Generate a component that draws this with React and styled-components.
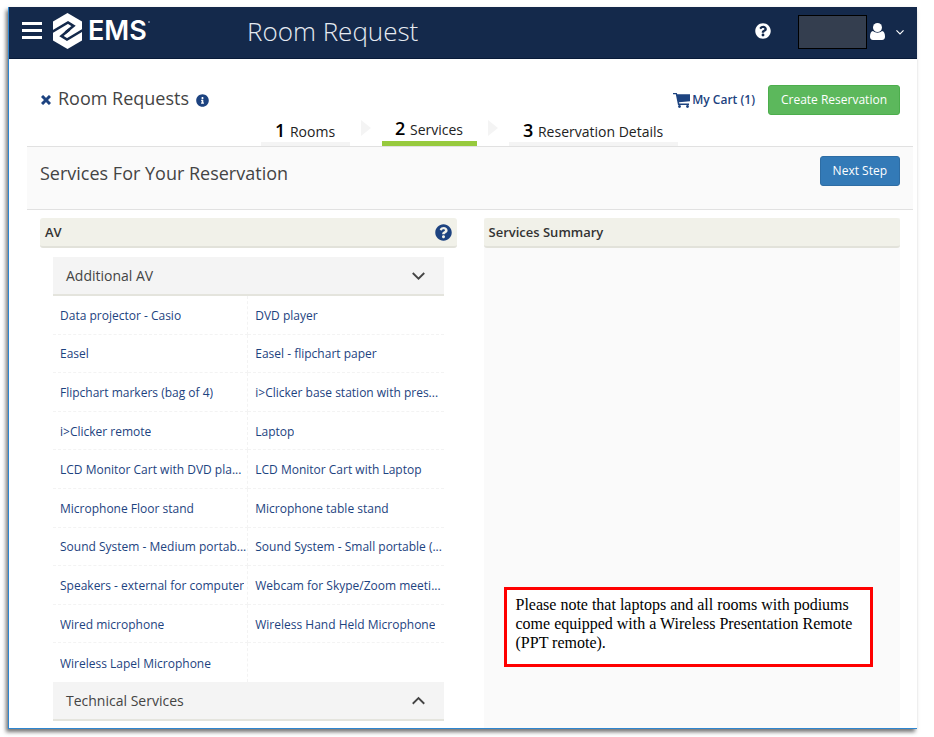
import React from "react";
import styled, { createGlobalStyle, css } from "styled-components";
import { FaQuestionCircle, FaInfoCircle } from "react-icons/fa";

const Global = createGlobalStyle`
  *, *::before, *::after { box-sizing: border-box; }
  body { margin: 0; background: #fff; color: #333; font: 13px/18px "Open Sans", "Noto Sans", sans-serif; }
  h1, h2, h3, p, ul, ol { margin: 0; padding: 0; font-weight: 400; }
  ul, ol { list-style: none; }
  button { font: inherit; cursor: pointer; border: 0; background: none; padding: 0; color: inherit; }
  a { text-decoration: none; color: #1d4380; }
  svg { display: block; flex: none; }
`;

const Window = styled.div`
  margin: 7px 17px 8px 8px;
  border: solid #2e86d0;
  border-width: 0 0 1px 1px;
  box-shadow: -2px 3px 4px rgba(0, 0, 0, 0.55);
  background: #fff;
`;

const TopBar = styled.header`
  display: grid;
  grid-template-columns: 238px 1fr auto;
  align-items: center;
  height: 52px;
  background: #14294b;
  border-bottom: 1px solid #081a38;
  color: #fff;
`;

const Brand = styled.div`
  display: flex;
  align-items: center;
  gap: 10px;
  padding: 0 0 4px 13px;
`;

const PageTitle = styled.h1`
  font-size: 26px;
  line-height: 36px;
  font-weight: 300;
  color: #e6ebf2;
  padding-bottom: 4px;
`;

const Account = styled.div`
  display: flex;
  align-items: center;
  padding: 0 13px 2px 0;
`;

const HelpButton = styled.button`
  margin-right: 27px;
  margin-bottom: 2px;
`;

const AccountButton = styled.button`
  display: flex;
  align-items: center;
  gap: 3px;
`;

const UserName = styled.span`
  width: 69px;
  height: 34px;
  background: #343e4f;
  border: 1px solid #000;
`;

const UserMenuIcons = styled.span`
  display: flex;
  align-items: center;
  gap: 11px;
`;

const Main = styled.main`
  padding: 0 4px 0 18px;
`;

const RequestHead = styled.div`
  display: flex;
  align-items: center;
  justify-content: space-between;
  padding: 26px 13px 0 14px;
`;

const Inline = styled.div`
  display: flex;
  align-items: center;
  gap: 7px;
`;

const RequestTitle = styled.h2`
  font-size: 18px;
  line-height: 26px;
  padding-bottom: 4px;
  color: #444;
`;

const CartLink = styled.a`
  display: flex;
  align-items: center;
  gap: 2px;
  font-size: 12px;
  font-weight: 600;
  margin-right: 6px;
`;

const ActionButton = styled.button`
  height: 30px;
  padding: 0 12px;
  border-radius: 3px;
  font-size: 12px;
  color: #fff;
  border: 1px solid ${(p) => (p.$tone === "green" ? "#4cae4c" : "#2e6da4")};
  background: ${(p) => (p.$tone === "green" ? "#5cb85c" : "#337ab7")};
`;

const Steps = styled.ol`
  display: flex;
  align-items: flex-end;
  gap: 11px;
  height: 31px;
  padding-left: 234px;
`;

const Step = styled.li`
  padding: 1px 15px 0 14px;
  height: 28px;
  font-size: 14px;
  line-height: 22px;
  color: #222;
  border-bottom: 4px solid #f4f4f4;
  strong { font-size: 18px; font-weight: 600; color: #000; margin-right: 1px; }
  ${(p) => p.$current && css`
    padding: 1px 14px 0 13px;
    height: 30px;
    border-bottom: 5px solid #97ca3d;
  `}
`;

const Arrow = styled.li`
  margin-bottom: 10px;
  border: solid transparent;
  border-width: 8px 0 8px 10px;
  border-left-color: #f4f4f4;
`;

const TitleBand = styled.section`
  display: flex;
  align-items: center;
  justify-content: space-between;
  height: 64px;
  padding: 0 13px;
  background: #fafafa;
  border: solid #e1e1e1;
  border-width: 1px 0;
  h2 { font-size: 18px; line-height: 26px; color: #444; padding-bottom: 10px; }
  button { margin-bottom: 14px; }
`;

const Columns = styled.div`
  display: grid;
  grid-template-columns: 1fr 1fr;
  gap: 27px;
  padding: 8px 13px 0;
`;

const Column = styled.section`
  display: flex;
  flex-direction: column;
  min-width: 0;
  background: ${(p) => (p.$shaded ? "#fafafa" : "#fff")};
`;

const PanelHead = styled.div`
  display: flex;
  align-items: center;
  justify-content: space-between;
  height: 30px;
  padding: 0 5px;
  background: #f1f1e9;
  border-bottom: 2px solid #e2e2da;
  border-radius: 3px;
  h3 { font-size: 13px; line-height: 18px; font-weight: 600; color: #333; }
  button { color: #1d4380; }
`;

const Groups = styled.div`
  padding: 9px 13px 7px;
`;

const GroupToggle = styled.button`
  display: flex;
  align-items: center;
  justify-content: space-between;
  width: 100%;
  height: 39px;
  padding: 0 19px 0 13px;
  background: #f4f4f4;
  border-bottom: 2px solid #e4e4dd;
  font-size: 14px;
  color: #444;
`;

const ServiceList = styled.ul`
  display: grid;
  grid-template-columns: 1fr 1fr;
  grid-auto-rows: 1fr;
  height: 386px;
`;

const ServiceItem = styled.li`
  display: flex;
  align-items: center;
  min-width: 0;
  padding: 2px 0 0 7px;
  font-size: 12px;
  border-bottom: 1px dashed #f3f3f3;
  border-right: 1px dashed #f3f3f3;
  &:nth-child(2n) { border-right: 0; }
  &:last-child { border-bottom: 0; }
  a { overflow: hidden; text-overflow: ellipsis; white-space: nowrap; }
`;

const Note = styled.aside`
  margin: auto 27px 61px 20px;
  min-height: 80px;
  padding: 5px 8px 5px 9px;
  border: 3px solid #f00;
  background: #fff;
  color: #000;
  font: 16px/19px "Liberation Serif", serif;
`;

const Menu = () => (
  <svg width="20" height="17" viewBox="0 0 20 17" fill="#fff">
    <path d="M0 0h20v3H0zM0 7h20v3H0zM0 14h20v3H0z" />
  </svg>
);

const Logo = () => (
  <svg width="100" height="36" viewBox="0 0 100 36" role="img" aria-label="EMS">
    <path fill="#fff" d="M15.500 0 30 8.500v19L15.500 36 1 27.500v-19z" />
    <g fill="none" stroke="#14294b" strokeWidth="2.600">
      <path d="M0 19 16 9.500l5.500 3.500-8 6.500" />
      <path d="M31 17 15 26.500 9.500 23l8-6.500" />
    </g>
    <text x="36" y="27" fill="#fff" fontFamily="Inter, sans-serif" fontSize="27" fontWeight="600">EMS</text>
    <circle cx="97" cy="9" r="1" fill="#8793a8" />
  </svg>
);

const User = () => (
  <svg width="15" height="17" viewBox="0 0 15 17" fill="#fff">
    <circle cx="7.500" cy="4.500" r="4.500" />
    <path d="M3 8c-2 .3-3 2.500-3 5.500C0 15.500 1 17 3 17h9c2 0 3-1.500 3-3.500 0-3-1-5.200-3-5.500-2.500 2.200-6.500 2.200-9 0z" />
  </svg>
);

const Chevron = ({ up, size = 12 }) => (
  <svg width={size} height={size} viewBox="0 0 12 12" fill="none" stroke="currentColor" strokeWidth="1.700">
    <path d={up ? "M.7 9 6 3.700 11.300 9" : "M.7 3.700 6 9 11.300 3.700"} />
  </svg>
);

const Cross = () => (
  <svg width="10" height="10" viewBox="0 0 10 10" stroke="#1d4380" strokeWidth="3">
    <path d="m1 1 8 8M9 1 1 9" />
  </svg>
);

const Cart = () => (
  <svg width="17" height="15" viewBox="0 0 17 15" fill="#1d4380">
    <path d="M0 0h3.800l.5 1.200H17V8.300L6 9.300l.3 1.200H16V12H5L2.800 1.200H0z" />
    <circle cx="6.500" cy="13.500" r="1.400" />
    <circle cx="14.500" cy="13.500" r="1.400" />
  </svg>
);

const services = [
  "Data projector - Casio", "DVD player",
  "Easel", "Easel - flipchart paper",
  "Flipchart markers (bag of 4)", "i>Clicker base station with pres...",
  "i>Clicker remote", "Laptop",
  "LCD Monitor Cart with DVD pla...", "LCD Monitor Cart with Laptop",
  "Microphone Floor stand", "Microphone table stand",
  "Sound System - Medium portab...", "Sound System - Small portable (...",
  "Speakers - external for computer", "Webcam for Skype/Zoom meeti...",
  "Wired microphone", "Wireless Hand Held Microphone",
  "Wireless Lapel Microphone",
];

export default function App() {
  return (
    <>
      <Global />
      <Window>
        <TopBar>
          <Brand>
            <button aria-label="Menu"><Menu /></button>
            <Logo />
          </Brand>
          <PageTitle>Room Request</PageTitle>
          <Account>
            <HelpButton aria-label="Help"><FaQuestionCircle size={16} /></HelpButton>
            <AccountButton aria-label="Account">
              <UserName />
              <UserMenuIcons><User /><Chevron size={8} /></UserMenuIcons>
            </AccountButton>
          </Account>
        </TopBar>
        <Main>
          <RequestHead>
            <Inline>
              <button aria-label="Close"><Cross /></button>
              <RequestTitle>Room Requests</RequestTitle>
              <FaInfoCircle size={13} color="#1d4380" />
            </Inline>
            <Inline>
              <CartLink href="#cart"><Cart />My Cart (1)</CartLink>
              <ActionButton $tone="green">Create Reservation</ActionButton>
            </Inline>
          </RequestHead>
          <Steps>
            <Step><strong>1</strong> Rooms</Step>
            <Arrow aria-hidden="true" />
            <Step $current aria-current="step"><strong>2</strong> Services</Step>
            <Arrow aria-hidden="true" />
            <Step><strong>3</strong> Reservation Details</Step>
          </Steps>
          <TitleBand>
            <h2>Services For Your Reservation</h2>
            <ActionButton $tone="blue">Next Step</ActionButton>
          </TitleBand>
          <Columns>
            <Column>
              <PanelHead>
                <h3>AV</h3>
                <button aria-label="AV help"><FaQuestionCircle size={17} /></button>
              </PanelHead>
              <Groups>
                <GroupToggle aria-expanded="true">Additional AV<Chevron size={13} /></GroupToggle>
                <ServiceList>
                  {services.map((name) => (
                    <ServiceItem key={name}><a href="#service">{name}</a></ServiceItem>
                  ))}
                </ServiceList>
                <GroupToggle aria-expanded="false">Technical Services<Chevron up size={13} /></GroupToggle>
              </Groups>
            </Column>
            <Column $shaded>
              <PanelHead><h3>Services Summary</h3></PanelHead>
              <Note>
                Please note that laptops and all rooms with podiums come equipped with a Wireless Presentation Remote (PPT remote).
              </Note>
            </Column>
          </Columns>
        </Main>
      </Window>
    </>
  );
}
